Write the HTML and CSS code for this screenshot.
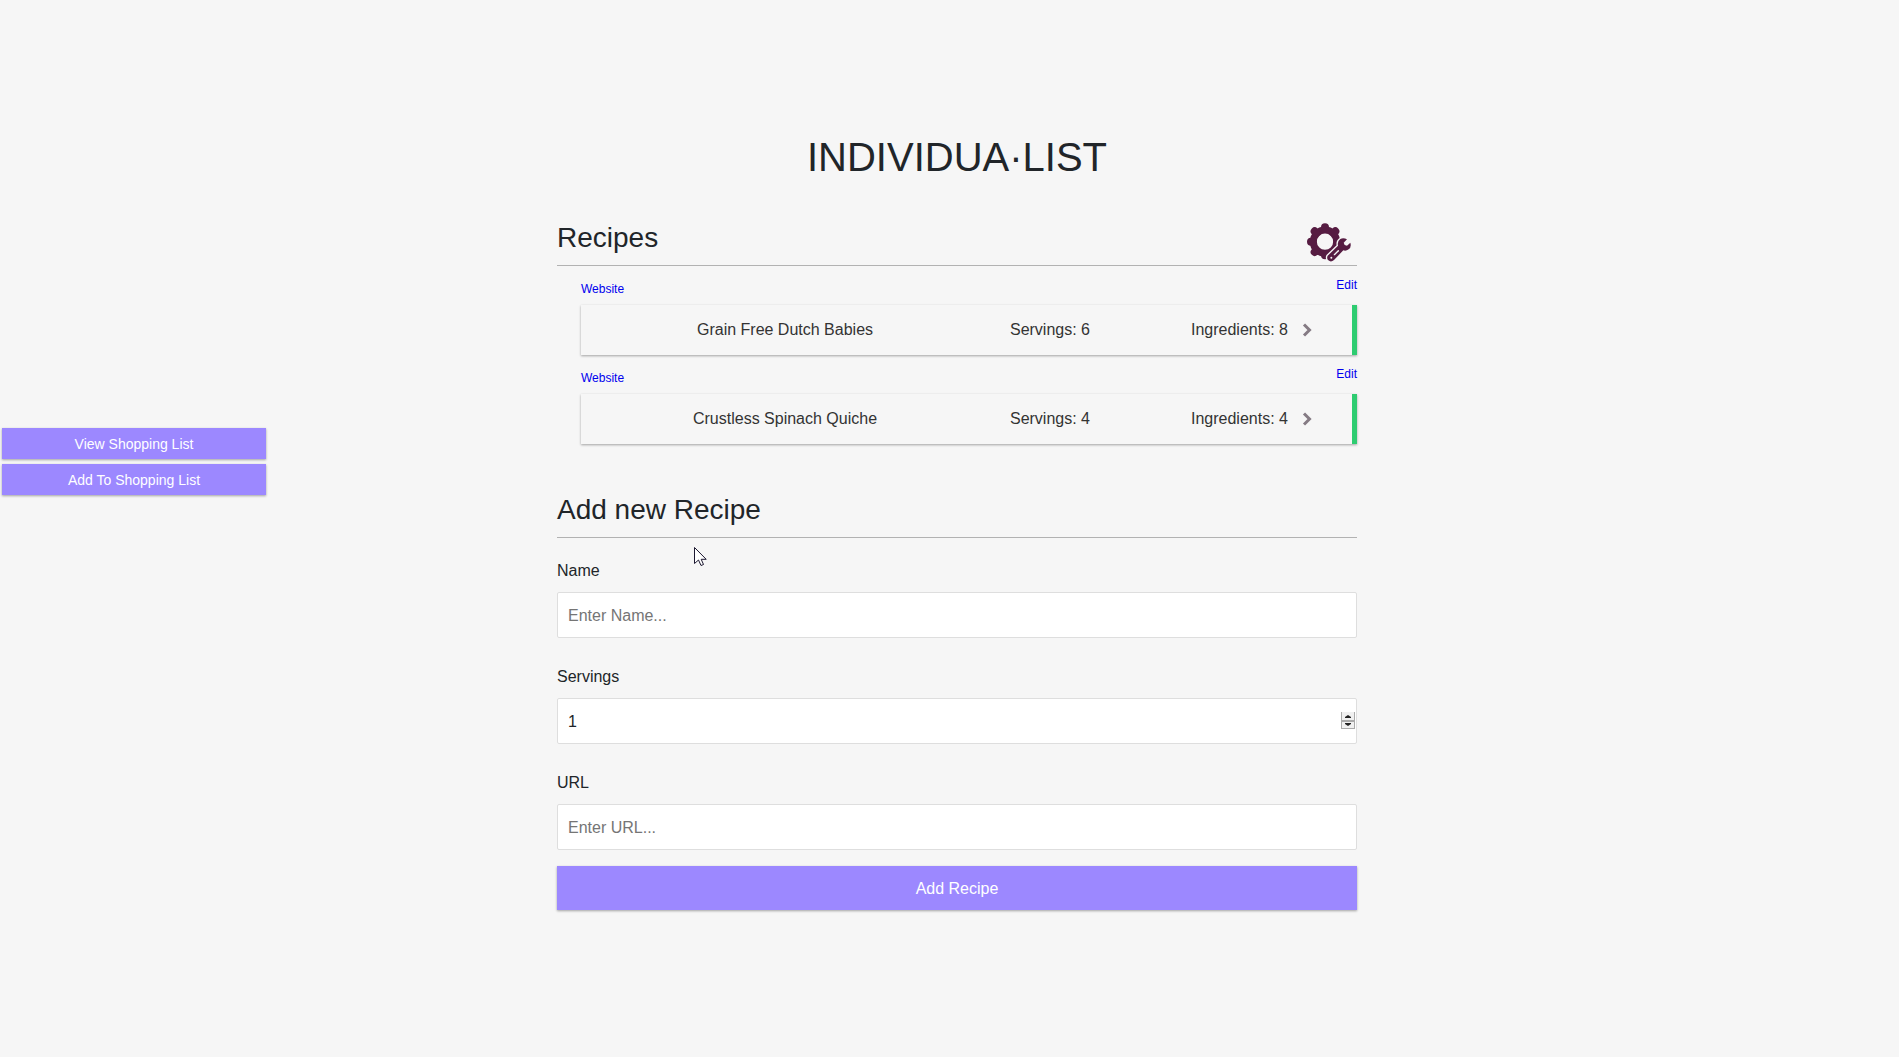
FILE: index.html
```html
<!DOCTYPE html>
<html lang="en">
<head>
  <meta charset="utf-8">
  <meta name="viewport" content="width=device-width, initial-scale=1">
  <title>Individua·list</title>
  <link rel="stylesheet" href="styles.css">
</head>
<body>
  <div class="layout">
    <aside class="sidebar">
      <button class="btn btn-small" type="button">View Shopping List</button>
      <button class="btn btn-small" type="button">Add To Shopping List</button>
    </aside>
    <main class="container">
      <h1 class="title">INDIVIDUA·LIST</h1>

      <section class="recipes">
        <div class="section-head">
          <h2 class="section-title">Recipes</h2>
          <button class="settings" type="button" aria-label="Manage recipes">
            <svg width="46" height="40" viewBox="48 36 138 120" aria-hidden="true">
              <circle cx="105" cy="95" r="35" fill="none" stroke="#561c42" stroke-width="21"/>
              <path d="M105 57V52M105 132V136M68 95H63M142 95H144M79 69L74 64M131 69L136 64M79 121L74 126" fill="none" stroke="#561c42" stroke-width="24" stroke-linecap="round"/>
              <path fill="#561c42" stroke="#f6f6f6" stroke-width="8" paint-order="stroke" stroke-linejoin="round" d="M113 137 L144 107 Q141 94 151 87 Q160 82 171 88 L161 98 L164 105 L171 107 L181 98 Q185 111 176 118 Q168 124 160 121 L132 150 Q123 158 115 151 Q109 145 113 137 Z"/>
              <path d="M133 134 L145 122" stroke="#f6f6f6" stroke-width="4" stroke-linecap="round"/>
              <circle cx="124" cy="143" r="3" fill="#f6f6f6"/>
            </svg>
          </button>
        </div>
        <ul class="recipe-list">
          <li>
            <div class="recipe-links"><a class="link-site" href="#site-1">Website</a><a href="#edit-1">Edit</a></div>
            <div class="card">
              <span>Grain Free Dutch Babies</span>
              <span>Servings: 6</span>
              <span class="ingredients">Ingredients: 8
                <svg class="chevron" width="10" height="16" viewBox="0 0 10 16" aria-hidden="true"><path d="M2 2.5 L7.5 8 L2 13.5"/></svg>
              </span>
            </div>
          </li>
          <li>
            <div class="recipe-links"><a class="link-site" href="#site-2">Website</a><a href="#edit-2">Edit</a></div>
            <div class="card">
              <span>Crustless Spinach Quiche</span>
              <span>Servings: 4</span>
              <span class="ingredients">Ingredients: 4
                <svg class="chevron" width="10" height="16" viewBox="0 0 10 16" aria-hidden="true"><path d="M2 2.5 L7.5 8 L2 13.5"/></svg>
              </span>
            </div>
          </li>
        </ul>
      </section>

      <section class="new-recipe">
        <div class="section-head">
          <h2 class="section-title">Add new Recipe</h2>
        </div>
        <form class="form">
          <div class="field">
            <label for="name">Name</label>
            <input id="name" type="text" placeholder="Enter Name...">
          </div>
          <div class="field">
            <label for="servings">Servings</label>
            <div class="number">
              <input id="servings" type="number" min="1" value="1">
              <svg class="spinner" width="14" height="17" viewBox="0 0 14 17" aria-hidden="true">
                <path fill="#f0f0f0" d="M0 0H14V17H0Z"/>
                <path fill="#aaa" d="M0 0H1V17H0ZM13 0H14V17H13ZM0 8H14V10H0ZM0 16H14V17H0Z"/>
                <path fill="#222" d="M4 6V5L7 3L10 5V6ZM4 11V12L7 14L10 12V11Z"/>
              </svg>
            </div>
          </div>
          <div class="field">
            <label for="url">URL</label>
            <input id="url" type="text" placeholder="Enter URL...">
          </div>
          <button class="btn btn-submit" type="button">Add Recipe</button>
        </form>
        <svg class="pointer" width="13" height="20" viewBox="0 0 13 20" aria-hidden="true">
          <path d="M.5 .5V16.5L4.5 13L7 18.5L9.5 17.5L7.2 12.3H12.2Z"/>
        </svg>
      </section>
    </main>
  </div>
</body>
</html>
```
FILE: styles.css
```css
* {
  box-sizing: border-box;
}

body {
  margin: 0;
  min-height: 100vh;
  background: #f6f6f6;
  color: #212529;
  font: 16px/24px "Liberation Sans", Arial, sans-serif;
}

button,
input {
  font: inherit;
}

h1,
h2,
ul {
  margin: 0;
  padding: 0;
  font-weight: 400;
}

.layout {
  display: grid;
  grid-template-columns: 557fr minmax(0, 800px) 542fr;
}

.sidebar {
  display: flex;
  flex-direction: column;
  gap: 5px;
  width: 266px;
  padding: 428px 0 0 2px;
}

.btn {
  display: block;
  width: 100%;
  border: 0;
  background: #9c88ff;
  color: #fff;
  box-shadow: 0 1px 3px rgba(0, 0, 0, 0.12), 0 1px 2px rgba(0, 0, 0, 0.24);
  cursor: pointer;
}

.btn-small {
  height: 31px;
  padding: 0;
  font-size: 14px;
}

.container {
  padding: 133px 0 40px;
}

.title {
  font-size: 40px;
  line-height: 48px;
  text-align: center;
}

.recipes {
  margin-top: 40px;
}

.section-head {
  display: flex;
  justify-content: space-between;
  height: 45px;
  border-bottom: 1px solid #b2b2b2;
}

.section-title {
  font-size: 28px;
  line-height: 34px;
}

.settings {
  height: 40px;
  margin: 1px 5px 0 0;
  padding: 0;
  border: 0;
  background: none;
  cursor: pointer;
}

.settings svg {
  display: block;
}

.recipe-list {
  padding-left: 24px;
  list-style: none;
}

.recipe-links {
  display: flex;
  justify-content: space-between;
  height: 39px;
  padding-top: 11px;
  font-size: 12px;
  line-height: 16px;
}

.recipe-links a {
  color: #00e;
  text-decoration: none;
}

.recipe-links .link-site {
  padding-top: 4px;
}

.card {
  display: grid;
  grid-template-columns: 408fr 122fr 241fr;
  align-items: center;
  height: 50px;
  border-right: 5px solid #2ecc71;
  color: #333;
  text-align: center;
  box-shadow: 0 1px 3px rgba(0, 0, 0, 0.12), 0 1px 2px rgba(0, 0, 0, 0.24);
}

.ingredients {
  display: flex;
  align-items: center;
  gap: 14px;
  padding-left: 80px;
}

.chevron {
  fill: none;
  stroke: #857b84;
  stroke-width: 3;
}

.new-recipe {
  position: relative;
  margin-top: 49px;
}

.form {
  padding-top: 21px;
}

.field {
  margin-bottom: 27px;
}

.field:last-of-type {
  margin-bottom: 16px;
}

.field label {
  display: block;
  margin-bottom: 9px;
}

.field input {
  display: block;
  width: 100%;
  height: 46px;
  padding: 2px 10px 0;
  border: 1px solid #dedede;
  border-radius: 2px;
  background: #fff;
  color: #212529;
}

.field input::placeholder {
  color: #757575;
}

.number {
  position: relative;
}

.number input {
  appearance: textfield;
}

.number input::-webkit-inner-spin-button {
  appearance: none;
}

.spinner {
  position: absolute;
  top: 14px;
  right: 2px;
}

.btn-submit {
  height: 44px;
  padding: 2px 0 0;
}

.pointer {
  position: absolute;
  top: 54px;
  left: 137px;
  fill: #fff;
  stroke: #1c1830;
}
```
